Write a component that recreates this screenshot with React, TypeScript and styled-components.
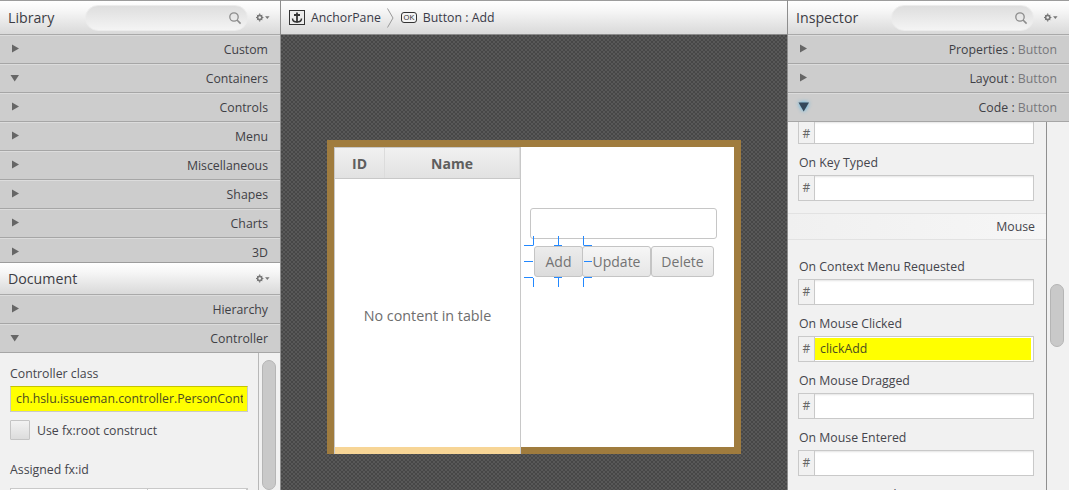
import React from 'react'
import styled, { createGlobalStyle } from 'styled-components'

const Global = createGlobalStyle`
  html, body { margin: 0; padding: 0; height: 100%; overflow: hidden; }
  body { font-family: "Open Sans", "Noto Sans", "Liberation Sans", sans-serif; color: #3a3a3a; }
  #root { height: 100%; }
`

const Page = styled.div`
  width: 1069px;
  height: 490px;
  display: flex;
  overflow: hidden;
  background: #f2f2f2;
`

const Side = styled.div<{ $width: number }>`
  width: ${p => p.$width}px;
  flex: none;
  display: flex;
  flex-direction: column;
  overflow: hidden;
  background: #f1f1f1;
`

const PanelHeader = styled.div<{ $height: number; $right?: number }>`
  height: ${p => p.$height}px;
  flex: none;
  box-sizing: border-box;
  display: flex;
  align-items: center;
  padding: 0 ${p => p.$right ?? 10}px 0 8px;
  background: linear-gradient(#ffffff, #f6f6f6 30%, #d9d9d9);
  border-top: 1px solid #9c9c9c;
  border-bottom: 1px solid #a9a9a9;
`

const PanelTitle = styled.div`
  font-size: 14.2px;
  color: #3c3c44;
  flex: 1;
`

const SearchBox = styled.div<{ $width: number; $gap: number }>`
  width: ${p => p.$width}px;
  height: 26px;
  box-sizing: border-box;
  margin-right: ${p => p.$gap}px;
  border: 1px solid #ececec;
  border-radius: 13px;
  background: linear-gradient(#dedede, #f4f4f4);
  display: flex;
  align-items: center;
  justify-content: flex-end;
  padding-right: 5px;
`

const Gear = ({ grey = '#777' }: { grey?: string }) => (
  <svg width="14" height="9" viewBox="0 0 17 10">
    <circle cx="4.5" cy="5" r="2.6" fill="none" stroke={grey} strokeWidth="2" />
    <path
      d="M4.5 0v2M4.5 8v2M0 5h2M7 5h2M1.300 1.800l1.400 1.400M6.300 6.800l1.400 1.400M1.300 8.200l1.400-1.400M6.300 3.200l1.400-1.400"
      stroke={grey}
      strokeWidth="1.2"
    />
    <path d="M11 3.500h5.500l-2.750 3.200z" fill={grey} />
  </svg>
)

const Magnifier = () => (
  <svg width="14" height="14" viewBox="0 0 14 14">
    <circle cx="6" cy="6" r="4.2" fill="none" stroke="#8c8c8c" strokeWidth="1.3" />
    <path d="M9 9l3.600 3.600" stroke="#8c8c8c" strokeWidth="1.6" />
  </svg>
)

const LibraryRows = styled.div`
  height: 227px;
  flex: none;
  overflow: hidden;
`

const Section = styled.div`
  height: 29px;
  flex: none;
  box-sizing: border-box;
  position: relative;
  display: flex;
  align-items: center;
  justify-content: flex-end;
  padding: 0 12px;
  background: #cdcdcd;
  border-top: 1px solid #dcdcdc;
  border-bottom: 1px solid #a6a6a6;
  font-size: 12.3px;
  color: #3f3f45;
`

const SectionArrow = styled.svg<{ $glow?: boolean }>`
  position: absolute;
  left: 10px;
  top: 7px;
  ${p => (p.$glow ? 'filter: drop-shadow(0 0 2px #3fb0e8);' : '')}
`

const Muted = styled.span`
  color: #77777b;
`

const AccordionRow = ({
  children,
  open,
  glow,
}: {
  children: React.ReactNode
  open?: boolean
  glow?: boolean
}) => (
  <Section>
    <SectionArrow width="12" height="12" viewBox="0 0 12 12" $glow={glow}>
      {glow ? (
        <path d="M0.500 1.500h10.500L5.700 10.500z" fill="#33475a" />
      ) : open ? (
        <path d="M0.500 3h8.500L4.700 9.500z" fill="#666" />
      ) : (
        <path d="M2 1.500l7 4-7 4z" fill="#666" />
      )}
    </SectionArrow>
    {children}
  </Section>
)

const ControllerBody = styled.div`
  flex: 1;
  display: flex;
  min-height: 0;
`

const ControllerForm = styled.div`
  width: 259px;
  flex: none;
  box-sizing: border-box;
  padding: 12px 0 0 10px;
  border-right: 1px solid #b8b8b8;
  overflow: hidden;
`

const Caption = styled.div`
  font-size: 12.3px;
  line-height: 17px;
  color: #45454c;
`

const ClassField = styled.div`
  width: 238px;
  height: 26px;
  box-sizing: border-box;
  margin-top: 4px;
  padding: 0 4px 0 5px;
  background: #ffff00;
  border: 1px solid #c9c9c9;
  border-top-color: #c4c400;
`

const ClassText = styled.div`
  font-size: 12.3px;
  line-height: 24px;
  color: #4c4c20;
  white-space: nowrap;
  overflow: hidden;
`

const CheckRow = styled.div`
  display: flex;
  align-items: center;
  gap: 7px;
  margin-top: 8px;
  font-size: 12.3px;
  color: #45454c;
`

const CheckBoxShape = styled.div`
  width: 20px;
  height: 20px;
  box-sizing: border-box;
  border: 1px solid #c4c4c4;
  border-radius: 1px;
  background: linear-gradient(#f2f2f2, #dcdcdc);
`

const IdCaption = styled(Caption)`
  margin-top: 21px;
`

const IdTable = styled.div`
  width: 236px;
  height: 20px;
  margin-top: 10px;
  display: flex;
  border: 1px solid #c9c9c9;
  background: #ffffff;
`

const IdCell = styled.div<{ $width?: number }>`
  ${p => (p.$width ? `width: ${p.$width}px; flex: none;` : 'flex: 1;')}
  border-right: 1px solid #c9c9c9;
`

const ScrollGutter = styled.div<{ $pad: number }>`
  flex: 1;
  padding: ${p => p.$pad}px 3px 0 3px;
`

const Thumb = styled.div<{ $height: number; $mt?: number }>`
  width: 14px;
  height: ${p => p.$height}px;
  margin-top: ${p => p.$mt ?? 0}px;
  box-sizing: border-box;
  background: #c9c9c9;
  border: 1px solid #b5b5b5;
  border-radius: 7px;
`

const Center = styled.div`
  flex: 1;
  display: flex;
  flex-direction: column;
  border-left: 1px solid #8e8e8e;
  border-right: 1px solid #8e8e8e;
  min-width: 0;
`

const Crumbs = styled.div`
  height: 35px;
  flex: none;
  box-sizing: border-box;
  display: flex;
  align-items: center;
  padding-left: 8px;
  background: linear-gradient(#ffffff, #f6f6f6 30%, #d9d9d9);
  border-top: 1px solid #9c9c9c;
  border-bottom: 1px solid #8a8a8a;
  font-size: 12.3px;
  color: #3a3a48;
`

const CrumbLabel = styled.span<{ $ml: number }>`
  margin-left: ${p => p.$ml}px;
`

const CrumbArrow = styled.svg`
  margin-left: 6px;
`

const OkIcon = styled.svg`
  margin-left: 7px;
`

const Canvas = styled.div`
  flex: 1;
  position: relative;
  background-color: #4c4c4c;
  background-image: repeating-conic-gradient(#585858 0 25%, #474747 0 50%);
  background-size: 4px 4px;
  overflow: hidden;
`

const DesignRoot = styled.div`
  position: absolute;
  left: 46px;
  top: 105px;
  width: 414px;
  height: 314px;
  box-sizing: border-box;
  border: 7px solid #a07c3e;
  background: #ffffff;
`

const TableNode = styled.div`
  position: absolute;
  left: 0;
  top: 0;
  width: 187px;
  height: 307px;
  box-sizing: border-box;
  border-right: 1px solid #c8c8c8;
  border-left: 1px solid #c8c8c8;
  border-top: 1px solid #c8c8c8;
  background: #ffffff;
  display: flex;
  flex-direction: column;
`

const TableHead = styled.div`
  height: 30px;
  flex: none;
  display: flex;
  border-bottom: 1px solid #c8c8c8;
`

const HeadCell = styled.div<{ $width?: number }>`
  ${p => (p.$width ? `width: ${p.$width}px; flex: none;` : 'flex: 1;')}
  display: flex;
  align-items: center;
  justify-content: center;
  background: linear-gradient(#f1f1f1, #e2e2e2);
  border-right: 1px solid #dcdcdc;
  font-size: 14px;
  font-weight: 700;
  color: #5e5e5e;
`

const EmptyNote = styled.div`
  flex: 1;
  display: flex;
  align-items: center;
  justify-content: center;
  padding-top: 5px;
  font-size: 14.3px;
  color: #6e6e6e;
`

const TableOverflow = styled.div`
  height: 7px;
  flex: none;
  background: #f7d596;
`

const InputNode = styled.div`
  position: absolute;
  left: 196px;
  top: 61px;
  width: 187px;
  height: 31px;
  box-sizing: border-box;
  border: 1px solid #c6c6c6;
  border-radius: 3px;
  background: #ffffff;
`

const ButtonNode = styled.div<{ $x: number; $width: number; $selected?: boolean }>`
  position: absolute;
  left: ${p => p.$x}px;
  top: 99px;
  width: ${p => p.$width}px;
  height: 31px;
  box-sizing: border-box;
  display: flex;
  align-items: center;
  justify-content: center;
  border: 1px solid #c4c4c4;
  border-radius: 3px;
  background: ${p =>
    p.$selected
      ? 'linear-gradient(#ececec, #dcdcdc)'
      : 'linear-gradient(#f6f6f6, #e6e6e6)'};
  font-size: 14px;
  color: #737373;
`

const Handles = styled.svg`
  position: absolute;
  left: 190px;
  top: 89px;
`

const FieldScroll = styled.div`
  flex: 1;
  min-height: 0;
  display: flex;
  overflow: hidden;
`

const FieldColumn = styled.div`
  width: 259px;
  flex: none;
  box-sizing: border-box;
  border-right: 1px solid #8f8f8f;
  overflow: hidden;
`

const EventField = styled.div`
  margin: 0 12px 0 10px;
`

const EventLabel = styled(Caption)`
  height: 17px;
  margin: 10px 0 4px 1px;
  white-space: nowrap;
`

const FieldBox = styled.div`
  display: flex;
  height: 26px;
  box-sizing: border-box;
  border: 1px solid #c9c9c9;
  background: #ffffff;
`

const FieldHash = styled.div`
  width: 15px;
  flex: none;
  border-right: 1px solid #c9c9c9;
  background: #f1f1f1;
  font-size: 12px;
  line-height: 24px;
  text-align: center;
  color: #666;
`

const FieldValue = styled.div<{ $mark?: boolean }>`
  flex: 1;
  padding-left: 5px;
  font-size: 12.3px;
  line-height: 22px;
  color: #4c4c20;
  ${p => (p.$mark ? 'background: #ffff00; margin: 1px 2px 1px 0;' : 'box-shadow: inset 0 2px 2px -1px #e4e4e4;')}
`

const GroupBar = styled.div`
  height: 27px;
  margin: 12px 0 18px;
  box-sizing: border-box;
  display: flex;
  align-items: center;
  justify-content: flex-end;
  padding-right: 11px;
  background: linear-gradient(90deg, #f0f0f0, #f6f6f6);
  border-top: 1px solid #e2e2e2;
  border-bottom: 1px solid #e2e2e2;
  font-size: 12.3px;
  color: #45454c;
`

const ClippedField = styled(FieldBox)`
  height: 22px;
  border-top: none;
`

const Event = ({ label, value }: { label: string; value?: string }) => (
  <EventField>
    <EventLabel>{label}</EventLabel>
    <FieldBox>
      <FieldHash>#</FieldHash>
      <FieldValue $mark={!!value}>{value}</FieldValue>
    </FieldBox>
  </EventField>
)

const libraryRows = ['Custom', 'Containers', 'Controls', 'Menu', 'Miscellaneous', 'Shapes', 'Charts', '3D']

// resize handles around the selected button: [x1, y1, x2, y2]
const handleLines = [
  [0, 9.5, 9, 9.5],
  [9.5, 0, 9.5, 9.5],
  [30, 9.5, 38, 9.5],
  [34.5, 0, 34.5, 9],
  [60, 9.5, 68, 9.5],
  [59.5, 0, 59.5, 9.5],
  [0, 25.5, 9, 25.5],
  [60, 25.5, 68, 25.5],
  [0, 41.5, 9, 41.5],
  [9.5, 42, 9.5, 51],
  [30, 41.5, 38, 41.5],
  [34.5, 42, 34.5, 51],
  [60, 41.5, 68, 41.5],
  [59.5, 42, 59.5, 51],
]

export default function App() {
  return (
    <Page>
      <Global />
      <Side $width={280}>
        <PanelHeader $height={35}>
          <PanelTitle>Library</PanelTitle>
          <SearchBox $width={163} $gap={8}>
            <Magnifier />
          </SearchBox>
          <Gear />
        </PanelHeader>
        <LibraryRows>
          {libraryRows.map(row => (
            <AccordionRow key={row} open={row === 'Containers'}>
              {row}
            </AccordionRow>
          ))}
        </LibraryRows>
        <PanelHeader $height={33}>
          <PanelTitle>Document</PanelTitle>
          <Gear />
        </PanelHeader>
        <AccordionRow>Hierarchy</AccordionRow>
        <AccordionRow open>Controller</AccordionRow>
        <ControllerBody>
          <ControllerForm>
            <Caption>Controller class</Caption>
            <ClassField>
              <ClassText>ch.hslu.issueman.controller.PersonController</ClassText>
            </ClassField>
            <CheckRow>
              <CheckBoxShape />
              Use fx:root construct
            </CheckRow>
            <IdCaption>Assigned fx:id</IdCaption>
            <IdTable>
              <IdCell $width={136} />
              <IdCell />
            </IdTable>
          </ControllerForm>
          <ScrollGutter $pad={7}>
            <Thumb $height={130} />
          </ScrollGutter>
        </ControllerBody>
      </Side>
      <Center>
        <Crumbs>
          <svg width="16" height="15" viewBox="0 0 16 15">
            <rect x="0.500" y="0.500" width="15" height="14" fill="#ececec" stroke="#333" />
            <path d="M8 2.500v10M5 5h6" fill="none" stroke="#333" strokeWidth="1.8" />
            <path d="M3.500 8.500c0 2.500 2 3.500 4.500 3.500s4.500-1 4.500-3.500" fill="none" stroke="#333" strokeWidth="1.5" />
          </svg>
          <CrumbLabel $ml={6}>AnchorPane</CrumbLabel>
          <CrumbArrow width="7" height="20" viewBox="0 0 7 20">
            <path d="M0.500 0.500l5.500 9.500-5.500 9.500" fill="none" stroke="#999" />
          </CrumbArrow>
          <OkIcon width="16" height="11" viewBox="0 0 16 11">
            <rect x="0.500" y="0.500" width="15" height="10" rx="2.500" fill="#f4f4f4" stroke="#333" />
            <text x="8" y="8.200" textAnchor="middle" fontSize="7.500" fontFamily="Liberation Sans, sans-serif" fill="#333">
              OK
            </text>
          </OkIcon>
          <CrumbLabel $ml={6}>Button : Add</CrumbLabel>
        </Crumbs>
        <Canvas>
          <DesignRoot>
            <TableNode>
              <TableHead>
                <HeadCell $width={49}>ID</HeadCell>
                <HeadCell>Name</HeadCell>
              </TableHead>
              <EmptyNote>No content in table</EmptyNote>
              <TableOverflow />
            </TableNode>
            <InputNode />
            <ButtonNode $x={200} $width={49} $selected>Add</ButtonNode>
            <ButtonNode $x={248} $width={69}>Update</ButtonNode>
            <ButtonNode $x={317} $width={63}>Delete</ButtonNode>
            <Handles width="68" height="51" viewBox="0 0 68 51">
              {handleLines.map(([x1, y1, x2, y2]) => (
                <line key={`${x1}-${y1}-${x2}`} x1={x1} y1={y1} x2={x2} y2={y2} stroke="#2288ff" strokeWidth="1" />
              ))}
            </Handles>
          </DesignRoot>
        </Canvas>
      </Center>
      <Side $width={281}>
        <PanelHeader $height={35} $right={11}>
          <PanelTitle>Inspector</PanelTitle>
          <SearchBox $width={143} $gap={10}>
            <Magnifier />
          </SearchBox>
          <Gear />
        </PanelHeader>
        <AccordionRow>
          Properties : <Muted>&nbsp;Button</Muted>
        </AccordionRow>
        <AccordionRow>
          Layout : <Muted>&nbsp;Button</Muted>
        </AccordionRow>
        <AccordionRow open glow>
          Code : <Muted>&nbsp;Button</Muted>
        </AccordionRow>
        <FieldScroll>
          <FieldColumn>
            <EventField>
              <ClippedField>
                <FieldHash>#</FieldHash>
                <FieldValue />
              </ClippedField>
            </EventField>
            <Event label="On Key Typed" />
            <GroupBar>Mouse</GroupBar>
            <Event label="On Context Menu Requested" />
            <Event label="On Mouse Clicked" value="clickAdd" />
            <Event label="On Mouse Dragged" />
            <Event label="On Mouse Entered" />
            <Event label="On Mouse Exited" />
          </FieldColumn>
          <ScrollGutter $pad={0}>
            <Thumb $height={63} $mt={162} />
          </ScrollGutter>
        </FieldScroll>
      </Side>
    </Page>
  )
}
